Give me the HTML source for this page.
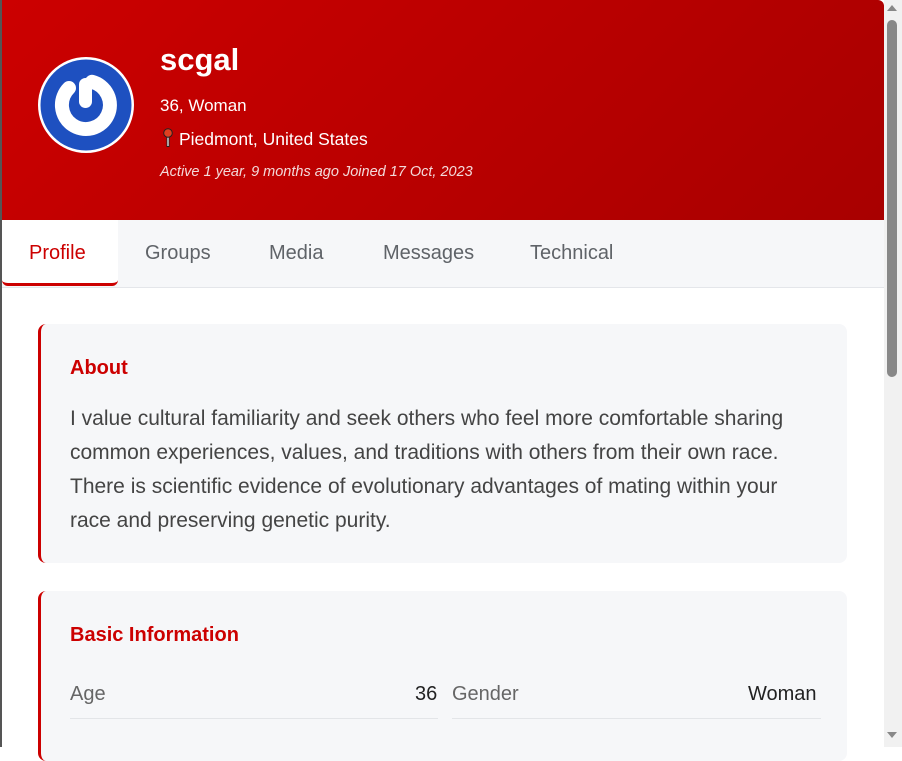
<!DOCTYPE html>
<html><head><meta charset="utf-8"><style>
*{box-sizing:border-box;margin:0;padding:0}
body{width:902px;height:747px;overflow:hidden;background:#fff;font-family:"Liberation Sans",sans-serif;position:relative}
.frame{position:absolute;left:0;top:0;width:2px;height:747px;background:#555}
.hdr{position:absolute;left:2px;top:0;width:882px;height:220px;background:linear-gradient(135deg,#cc0000,#a80000);border-top-right-radius:6px}
.av{position:absolute;left:38px;top:57px;width:96px;height:96px;border-radius:50%;background:#fff}
.name{position:absolute;left:160px;top:42px;color:#fff;font-weight:bold;font-size:31px}
.l1{position:absolute;left:160px;top:96px;color:#fff;font-size:17px}
.l2{position:absolute;left:163px;top:128px;color:#fff;font-size:17.5px}
.l3{position:absolute;left:160px;top:164px;color:#f3dada;font-size:14.5px;font-style:italic}
.tabs{position:absolute;left:2px;top:220px;width:882px;height:68px;background:#f6f7f9;border-bottom:1px solid #e4e6ea}
.tab{position:absolute;top:22px;font-size:20px;color:#5f6368}
.act{position:absolute;left:0;top:0;width:116px;height:66px;background:#fff;border-bottom:3px solid #cc0000;border-radius:0 0 6px 6px}
.card{position:absolute;left:38px;width:809px;background:#f6f7f9;border-left:3px solid #cc0000;border-radius:8px}
.card h2{position:absolute;left:29px;color:#cc0000;font-size:20px;font-weight:bold}
.p{position:absolute;left:29px;width:770px;font-size:21px;line-height:34px;color:#444;white-space:nowrap}
.sb{position:absolute;left:884px;top:0;width:18px;height:747px;background:#f1f1f1}
.th{position:absolute;left:887px;top:20px;width:10px;height:357px;background:#888;border-radius:5px}
.lbl{position:absolute;top:92px;font-size:20px;color:#666}
.val{position:absolute;top:92px;font-size:20px;color:#222}
.ln{position:absolute;top:127px;height:1px;background:#e3e5e8}
</style></head><body>
<div class="frame"></div>
<div class="hdr"></div>
<div class="av"><svg width="96" height="96" viewBox="0 0 96 96"><circle cx="48" cy="48" r="45.5" fill="#1e50c0"/><path d="M31 31 A24 24 0 1 0 54 24.8" fill="none" stroke="#fff" stroke-width="14" stroke-linecap="round"/><rect x="41" y="21" width="13" height="30" rx="6.5" fill="#fff"/></svg></div>
<div class="name">scgal</div>
<div class="l1">36, Woman</div>
<div class="l2"><svg width="10" height="20" viewBox="0 0 10 20" style="vertical-align:-3px;margin-right:6px"><rect x="3.5" y="7" width="3" height="12" fill="#222"/><rect x="4.3" y="7" width="1.4" height="11" fill="#ddd"/><circle cx="5" cy="5" r="4.3" fill="#e04020" stroke="#222" stroke-width="1"/></svg>Piedmont, United States</div>
<div class="l3">Active 1 year, 9 months ago Joined 17 Oct, 2023</div>
<div class="tabs"><div class="act"></div>
<div class="tab" style="left:27px;color:#cc0000">Profile</div>
<div class="tab" style="left:143px">Groups</div>
<div class="tab" style="left:267px">Media</div>
<div class="tab" style="left:381px">Messages</div>
<div class="tab" style="left:528px">Technical</div></div>
<div class="card" style="top:324px;height:239px"><h2 style="top:33px">About</h2>
<div class="p" style="top:78px">I value cultural familiarity and seek others who feel more comfortable sharing<br>common experiences, values, and traditions with others from their own race.<br>There is scientific evidence of evolutionary advantages of mating within your<br>race and preserving genetic purity.</div></div>
<div class="card" style="top:591px;height:170px"><h2 style="top:33px">Basic Information</h2>
<div class="lbl" style="left:29px">Age</div><div class="val" style="left:374px">36</div>
<div class="lbl" style="left:411px">Gender</div><div class="val" style="left:707px">Woman</div>
<div class="ln" style="left:29px;width:368px"></div><div class="ln" style="left:411px;width:369px"></div></div>
<div class="sb"></div><div class="th"></div>
<div style="position:absolute;left:887px;top:5px;width:0;height:0;border-left:5px solid transparent;border-right:5px solid transparent;border-bottom:6px solid #888"></div>
<div style="position:absolute;left:887px;top:732px;width:0;height:0;border-left:5px solid transparent;border-right:5px solid transparent;border-top:6px solid #888"></div>
</body></html>
